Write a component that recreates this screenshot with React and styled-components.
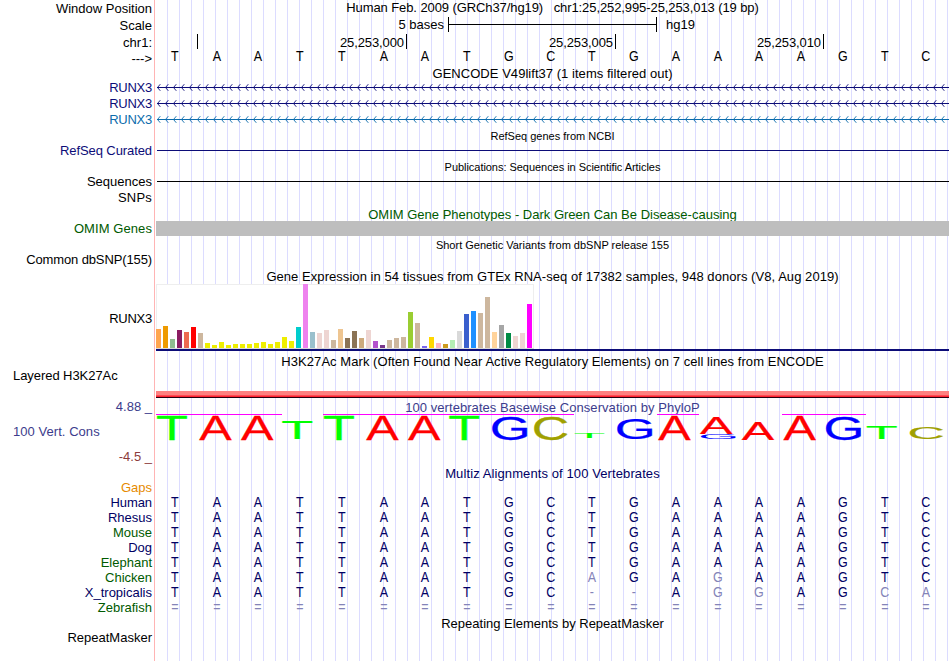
import React from "react";
import styled, { createGlobalStyle } from "styled-components";

const NAVY = "#0c0c78";
const DARK_NAVY = "#000064";
const GREEN = "#005a00";
const BLUE = "#0c6cac";

const GlobalStyle = createGlobalStyle`
  body {
    margin: 0;
    background: #fff;
    overflow: hidden;
  }
`;

const Page = styled.main`
  display: flex;
  flex-direction: column;
  box-sizing: border-box;
  width: 949px;
  height: 661px;
  overflow: hidden;
  font-family: "Liberation Sans", Arial, sans-serif;
  font-size: 13px;
  line-height: 15px;
  color: #000;
  white-space: pre;
  background-image: linear-gradient(#ffb4b4, #ffb4b4),
    repeating-linear-gradient(to right, #dcdcff 0 1px, transparent 1px 12px);
  background-size: 1px 100%, 782px 100%;
  background-position: 154px 0, 167px 0;
  background-repeat: no-repeat;
`;

const Row = styled.section`
  display: grid;
  grid-template-columns: 152px 793px;
  column-gap: 4px;
  flex: none;
  height: ${(p) => p.$h}px;
`;

const Label = styled.div`
  padding-top: ${(p) => p.$drop || 0}px;
  padding-left: 13px;
  text-align: ${(p) => (p.$left ? "left" : "right")};
  letter-spacing: ${(p) => p.$ls || 0}px;
  color: ${(p) => p.$color || "#000"};
`;

const Track = styled.div`
  display: flex;
  flex-direction: column;
  min-width: 0;
`;

const Title = styled.div`
  padding-top: ${(p) => p.$drop || 0}px;
  text-align: center;
  font-size: ${(p) => (p.$small ? 11 : 13)}px;
  line-height: ${(p) => (p.$small ? 13 : 15)}px;
  letter-spacing: ${(p) => p.$ls || 0}px;
  color: ${(p) => p.$color || "#000"};
`;

const ScaleTrack = styled.div`
  display: flex;
  align-items: flex-start;
`;

const ScaleText = styled.span`
  width: ${(p) => p.$w}px;
  text-align: right;
`;

const ScaleBar = styled.div`
  display: flex;
  align-items: center;
  box-sizing: border-box;
  width: 209px;
  height: 15px;
  margin: 0 9px 0 4px;
  border: solid #000;
  border-width: 0 1px;

  &::before {
    content: "";
    flex: 1;
    height: 1px;
    background: #000;
  }
`;

const Ruler = styled.div`
  display: flex;
`;

const Tick = styled.div`
  box-sizing: border-box;
  width: ${(p) => p.$w}px;
  height: 15px;
  padding: 1px 2px 0 0;
  border-right: 1px solid #000;
  line-height: 15px;
  letter-spacing: -0.1px;
  text-align: right;
`;

const Bases = styled.div`
  display: grid;
  grid-template-columns: repeat(19, 1fr);
  margin-left: -2px;
  width: 793px;
  color: ${(p) => p.$color || "#000"};
`;

const Base = styled.span`
  text-align: center;
  transform: scale(0.96, 1.08);
  transform-origin: 50% 80%;
  color: ${(p) => (p.$faint ? "#8484b8" : "inherit")};
`;

const ItemLine = styled.div`
  height: 1px;
  margin: 7px 0 0 1px;
  background: ${(p) => p.$color};
`;

const OmimBar = styled.div`
  height: 15px;
  background: #bebebe;
`;

const Band = styled.div`
  height: 7px;
  margin-top: 23px;
  background: linear-gradient(#ff8080 0 4px, #ff4c54 4px 5px, #ff2030 5px 6px, #280010 6px 7px);
`;

const Drawing = styled.svg`
  display: block;
  flex: none;
`;

const ConsLabels = styled.div`
  display: flex;
  flex-direction: column;
  justify-content: space-between;
  height: 65px;
  padding-left: 13px;
  color: #3c3c8c;
`;

const ConsLabel = styled.span`
  text-align: ${(p) => (p.$left ? "left" : "right")};
  color: ${(p) => p.$color || "inherit"};
  letter-spacing: ${(p) => p.$ls || 0}px;
`;

const LogoOverlay = styled.div`
  margin-top: -15px;
  height: 52px;
`;

const CHEVRONS = Array.from({ length: 99 }, (_, i) => 1 + i * 8);

function Intron({ color }) {
  return (
    <Drawing width="793" height="15" viewBox="0 0 793 15">
      <rect x="1" y="7" width="792" height="1" fill={color} />
      <path
        d={CHEVRONS.map((x) => `M${x + 3.3} 4.2L${x + 0.5} 7.5L${x + 3.3} 10.8`).join("")}
        fill="none"
        stroke={color}
        strokeWidth="0.9"
      />
    </Drawing>
  );
}

const TAN = "#cdb79e";
const PINK = "#eed5d2";
const YELLOW = "#eeee00";
const TISSUES = [
  [19, "#ffa54f"], [22, "#ee9a00"], [9, "#8fbc8f"], [18, "#8b1c62"], [16, "#ee6a50"],
  [21, "#ff0000"], [15, TAN], [5, YELLOW], [3, YELLOW], [6, YELLOW], [3, YELLOW],
  [4, YELLOW], [4, YELLOW], [4, YELLOW], [5, YELLOW], [6, YELLOW], [4, YELLOW],
  [6, YELLOW], [11, YELLOW], [7, YELLOW], [21, "#00cdcd"], [64, "#ee82ee"],
  [16, "#9ac0cd"], [15, PINK], [18, PINK], [8, TAN], [19, "#eec591"], [10, "#8b7355"],
  [17, "#8b7355"], [10, "#cdaa7d"], [18, PINK], [7, "#b452cd"], [3, "#7a378b"],
  [8, TAN], [10, TAN], [11, TAN], [36, "#9acd32"], [25, TAN], [2, "#7a67ee"],
  [11, "#ffd700"], [5, "#ffb6c1"], [4, "#cd9b1d"], [8, "#b4eeb4"], [17, "#d9d9d9"],
  [34, "#3a5fcd"], [37, "#1e90ff"], [35, TAN], [51, TAN], [16, "#ffd39b"],
  [23, "#a6a6a6"], [15, "#008b45"], [12, PINK], [15, PINK], [44, "#ff00ff"],
];

function ExpressionChart() {
  return (
    <Drawing width="793" height="67" viewBox="0 0 793 67">
      <rect x="0.5" y="0.5" width="377" height="64" fill="#fff" stroke="#eeeeee" />
      <rect x="0" y="64" width="378" height="1" fill="#d8d8d8" />
      {TISSUES.map(([h, fill], i) => (
        <rect key={i} x={i * 7} y={64 - h} width="5" height={h} fill={fill} />
      ))}
      <rect x="0" y="65" width="793" height="2" fill={NAVY} />
    </Drawing>
  );
}

// Horizontal ink extent of each glyph in em, and where it sits in its column.
const GLYPHS = {
  T: { fill: "#00ff00", ink: [0.021, 0.59], at: [1.2, 31] },
  A: { fill: "#ff0000", ink: [0.002, 0.665], at: [1.6, 33.8] },
  G: { fill: "#0000ff", ink: [0.05, 0.715], at: [2.4, 37.4] },
  C: { fill: "#a0a000", ink: [0.05, 0.683], at: [2.8, 35.6] },
};
const COL = 793 / 19;
const CAP = 0.688;
const LOGO = [
  ["T", 0, 17, 41], ["A", 1, 17, 41], ["A", 2, 17, 41], ["T", 3, 22, 40],
  ["T", 4, 17, 41], ["A", 5, 17, 41], ["A", 6, 17, 41], ["T", 7, 17, 41],
  ["G", 8, 17.3, 40.7], ["C", 9, 17.3, 40.7], ["T", 10, 34, 39], ["G", 11, 19.2, 39.8],
  ["A", 12, 17, 41], ["A", 13, 19, 35], ["G", 13, 35.2, 39.8], ["A", 14, 23, 40.5],
  ["A", 15, 17, 41], ["G", 16, 17.3, 40.7], ["T", 17, 27, 40], ["C", 18, 28.3, 39.8],
];
const CLIPPED = [[0, 2], [4, 9], [12, 12], [15, 16]];

function ConservationLogo() {
  return (
    <Drawing width="793" height="52" viewBox="0 1 793 52">
      {CLIPPED.map(([a, b]) => (
        <rect
          key={a}
          x={Math.round(a * COL)}
          y="15"
          width={Math.ceil((b + 1) * COL) - Math.round(a * COL)}
          height="1"
          fill="#ff00ff"
        />
      ))}
      {LOGO.map(([base, col, top, bottom], i) => {
        const { fill, ink, at } = GLYPHS[base];
        const sx = (at[1] - at[0]) / (ink[1] - ink[0]) / 100;
        const sy = (bottom - top) / CAP / 100;
        const x = col * COL + at[0] - ink[0] * 100 * sx;
        return (
          <text
            key={i}
            fontSize="100"
            fill={fill}
            stroke={fill}
            strokeWidth={bottom - top > 10 ? 0.35 : 0}
            vectorEffect="non-scaling-stroke"
            transform={`translate(${x} ${bottom}) scale(${sx} ${sy})`}
          >
            {base}
          </text>
        );
      })}
    </Drawing>
  );
}

const REFERENCE = "TAATTAATGCTGAAAAGTC";
const SPECIES = [
  { name: "Human", color: DARK_NAVY, bases: REFERENCE, ls: -0.1 },
  { name: "Rhesus", color: DARK_NAVY, bases: REFERENCE },
  { name: "Mouse", color: GREEN, bases: REFERENCE },
  { name: "Dog", color: DARK_NAVY, bases: REFERENCE },
  { name: "Elephant", color: GREEN, bases: REFERENCE },
  { name: "Chicken", color: GREEN, bases: "TAATTAATGCAGAGAAGTC" },
  { name: "X_tropicalis", color: DARK_NAVY, bases: "TAATTAATGC--AGGAGCA" },
  { name: "Zebrafish", color: GREEN, bases: "===================" },
];

function BaseRow({ bases, color }) {
  return (
    <Bases $color={color}>
      {[...bases].map((b, i) => (
        <Base key={i} $faint={b !== REFERENCE[i]}>{b}</Base>
      ))}
    </Bases>
  );
}

function TitleRow({ h, children, ...rest }) {
  return (
    <Row $h={h}>
      <Label />
      <Track><Title {...rest}>{children}</Title></Track>
    </Row>
  );
}

export default function App() {
  return (
    <>
      <GlobalStyle />
      <Page>
        <Row $h={17}>
          <Label $drop={1}>Window Position</Label>
          <Track><Title $ls={-0.09}>{"Human Feb. 2009 (GRCh37/hg19)   chr1:25,252,995-25,253,013 (19 bp)"}</Title></Track>
        </Row>
        <Row $h={17}>
          <Label $drop={1}>Scale</Label>
          <ScaleTrack>
            <ScaleText $w={288}>5 bases</ScaleText>
            <ScaleBar />
            <span>hg19</span>
          </ScaleTrack>
        </Row>
        <Row $h={15}>
          <Label $drop={1}>chr1:</Label>
          <Ruler>
            <Tick $w={42} />
            <Tick $w={209}>25,253,000</Tick>
            <Tick $w={209}>25,253,005</Tick>
            <Tick $w={208}>25,253,010</Tick>
          </Ruler>
        </Row>
        <Row $h={16}>
          <Label $drop={2}>{"--->"}</Label>
          <Track><BaseRow bases={REFERENCE} /></Track>
        </Row>
        <TitleRow h={15} $drop={1} $ls={0.04}>GENCODE V49lift37 (1 items filtered out)</TitleRow>
        {[NAVY, NAVY, BLUE].map((color, i) => (
          <Row $h={16} key={i}>
            <Label $color={color} $ls={-0.25}>RUNX3</Label>
            <Track><Intron color={color} /></Track>
          </Row>
        ))}
        <TitleRow h={15} $drop={2} $small>RefSeq genes from NCBI</TitleRow>
        <Row $h={16}>
          <Label $color={NAVY} $ls={-0.09}>RefSeq Curated</Label>
          <Track><ItemLine $color={NAVY} /></Track>
        </Row>
        <TitleRow h={15} $drop={2} $small $ls={-0.04}>Publications: Sequences in Scientific Articles</TitleRow>
        <Row $h={16}>
          <Label>Sequences</Label>
          <Track><ItemLine $color="#000" /></Track>
        </Row>
        <Row $h={16}>
          <Label $ls={0.2}>SNPs</Label>
        </Row>
        <TitleRow h={15} $drop={1} $color={GREEN}>OMIM Gene Phenotypes - Dark Green Can Be Disease-causing</TitleRow>
        <Row $h={15}>
          <Label $color={GREEN} $ls={0.08}>OMIM Genes</Label>
          <Track><OmimBar /></Track>
        </Row>
        <TitleRow h={16} $drop={3} $small>Short Genetic Variants from dbSNP release 155</TitleRow>
        <Row $h={16}>
          <Label $ls={-0.12}>Common dbSNP(155)</Label>
        </Row>
        <TitleRow h={16} $drop={1} $ls={0.055}>Gene Expression in 54 tissues from GTEx RNA-seq of 17382 samples, 948 donors (V8, Aug 2019)</TitleRow>
        <Row $h={69}>
          <Label $drop={27} $ls={-0.25}>RUNX3</Label>
          <Track><ExpressionChart /></Track>
        </Row>
        <TitleRow h={15} $drop={1} $ls={0.055}>H3K27Ac Mark (Often Found Near Active Regulatory Elements) on 7 cell lines from ENCODE</TitleRow>
        <Row $h={31}>
          <Label $left $ls={-0.06}>Layered H3K27Ac</Label>
          <Track><Band /></Track>
        </Row>
        <Row $h={67}>
          <ConsLabels>
            <ConsLabel>4.88 _</ConsLabel>
            <ConsLabel $left $ls={0.05}>100 Vert. Cons</ConsLabel>
            <ConsLabel $color="#8c3c3c">-4.5 _</ConsLabel>
          </ConsLabels>
          <Track>
            <Title $drop={1} $color="#3c3c8c" $ls={0.055}>100 vertebrates Basewise Conservation by PhyloP</Title>
            <LogoOverlay><ConservationLogo /></LogoOverlay>
          </Track>
        </Row>
        <TitleRow h={14} $color={DARK_NAVY} $ls={0.1}>Multiz Alignments of 100 Vertebrates</TitleRow>
        <Row $h={15}>
          <Label $color="#e68a00">Gaps</Label>
        </Row>
        {SPECIES.map(({ name, color, bases, ls }) => (
          <Row $h={15} key={name}>
            <Label $color={color} $ls={ls}>{name}</Label>
            <Track><BaseRow bases={bases} color={DARK_NAVY} /></Track>
          </Row>
        ))}
        <TitleRow h={15} $drop={1}>Repeating Elements by RepeatMasker</TitleRow>
        <Row $h={31}>
          <Label>RepeatMasker</Label>
        </Row>
      </Page>
    </>
  );
}
